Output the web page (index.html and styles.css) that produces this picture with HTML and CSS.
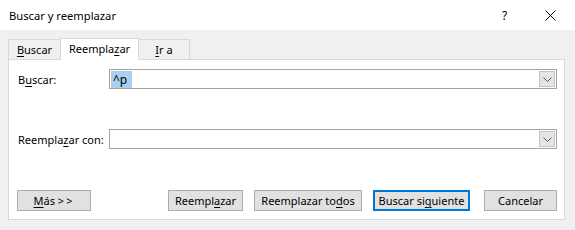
FILE: index.html
```html
<!DOCTYPE html>
<html lang="es">
<head>
  <meta charset="UTF-8">
  <title>Buscar y reemplazar</title>
  <link rel="stylesheet" href="styles.css">
</head>
<body>
  <div class="dialog">
    <div class="titlebar">
      <span class="title">Buscar y reemplazar</span>
      <span class="help">?</span>
      <span class="close">
        <svg width="11" height="11" viewBox="0 0 11 11"><path d="M0.5 0.5 L10.5 10.5 M10.5 0.5 L0.5 10.5" stroke="#000" stroke-width="1" fill="none"/></svg>
      </span>
    </div>

    <div class="tabs">
      <div class="tab"><u>B</u>uscar</div>
      <div class="tab active">Reempla<u>z</u>ar</div>
      <div class="tab"><u>I</u>r a</div>
    </div>

    <div class="panel">
      <div class="form">
        <label class="label">B<u>u</u>scar:</label>
        <div class="combo">
          <span class="value"><span class="selected">^p</span></span>
          <span class="drop"><svg width="9" height="5" viewBox="0 0 9 5"><path d="M0.5 0.5 L4.5 4.5 L8.5 0.5" stroke="#555" fill="none"/></svg></span>
        </div>
        <label class="label">Reempla<u>z</u>ar con:</label>
        <div class="combo">
          <span class="value"></span>
          <span class="drop"><svg width="9" height="5" viewBox="0 0 9 5"><path d="M0.5 0.5 L4.5 4.5 L8.5 0.5" stroke="#555" fill="none"/></svg></span>
        </div>
      </div>

      <div class="buttons">
        <button class="btn btn-more"><u>M</u>ás <span class="arrows">&gt;&gt;</span></button>
        <div class="spacer"></div>
        <button class="btn btn-replace">Reempl<u>a</u>zar</button>
        <button class="btn btn-all">Reemplazar to<u>d</u>os</button>
        <button class="btn btn-next default">Buscar si<u>g</u>uiente</button>
        <button class="btn btn-cancel">Cancelar</button>
      </div>
    </div>
  </div>
</body>
</html>
```

FILE: styles.css
```css
body {
  margin: 0;
  background: #f0f0f0;
  font-family: "Noto Sans", "Open Sans", sans-serif;
  font-size: 11px;
  color: #000;
}
u {
  text-decoration-thickness: 1px;
  text-underline-offset: 2px;
}
.dialog {
  width: 575px;
  height: 230px;
  overflow: hidden;
}
.titlebar {
  height: 30px;
  background: #fff;
  display: flex;
  align-items: center;
  padding-left: 9px;
}
.title {
  flex: 1;
  font-size: 11.2px;
}
.help {
  width: 12px;
  margin-right: 31px;
  font-size: 12px;
}
.close {
  width: 30px;
  display: flex;
}
.tabs {
  display: flex;
  align-items: flex-end;
  height: 21px;
  margin-top: 8px;
  padding-left: 8px;
}
.tab {
  box-sizing: border-box;
  height: 20px;
  padding: 0 8px;
  border: 1px solid #d9d9d9;
  border-bottom: none;
  display: flex;
  align-items: center;
  justify-content: center;
}
.tab:nth-child(1) { width: 52px; border-right: none; }
.tab:nth-child(3) { width: 51px; border-left: none; }
.tab.active {
  width: 79px;
  height: 22px;
  background: #fff;
  position: relative;
  top: 1px;
  padding-bottom: 2px;
}
.panel {
  box-sizing: border-box;
  width: 557px;
  height: 161px;
  margin-left: 8px;
  background: #fff;
  border: 1px solid #d9d9d9;
  display: flex;
  flex-direction: column;
  padding: 9px 7px 8px 7px;
}
.form {
  display: grid;
  grid-template-columns: 93px 1fr;
  row-gap: 40px;
  align-items: center;
}
.label {
  padding-left: 2px;
}
.combo {
  box-sizing: border-box;
  height: 20px;
  border: 1px solid #a5a5a5;
  display: flex;
  background: #fff;
}
.value {
  flex: 1;
  display: flex;
  align-items: center;
  padding-left: 1px;
}
.selected {
  background: #a9d0f0;
  padding: 0 5px 0 2px;
  line-height: 17px;
  font-size: 12px;
}
.drop {
  box-sizing: border-box;
  width: 16px;
  margin: 1px;
  background: #e5e5e5;
  border: 1px solid #c3c3c3;
  display: flex;
  align-items: center;
  justify-content: center;
}
.buttons {
  margin-top: auto;
  display: flex;
  align-items: center;
}
.spacer { flex: 1; }
.btn {
  box-sizing: border-box;
  height: 21px;
  font: inherit;
  color: #000;
  background: #e1e1e1;
  border: 1px solid #adadad;
  padding: 0;
}
.arrows { letter-spacing: 2px; }
.btn-more { width: 74px; margin-left: 1px; }
.btn-replace { width: 75px; }
.btn-all { width: 108px; margin-left: 11px; }
.btn-next { width: 97px; margin-left: 11px; }
.btn-cancel { width: 73px; margin-left: 14px; }
.btn.default {
  border: 2px solid #0078d7;
}
```
